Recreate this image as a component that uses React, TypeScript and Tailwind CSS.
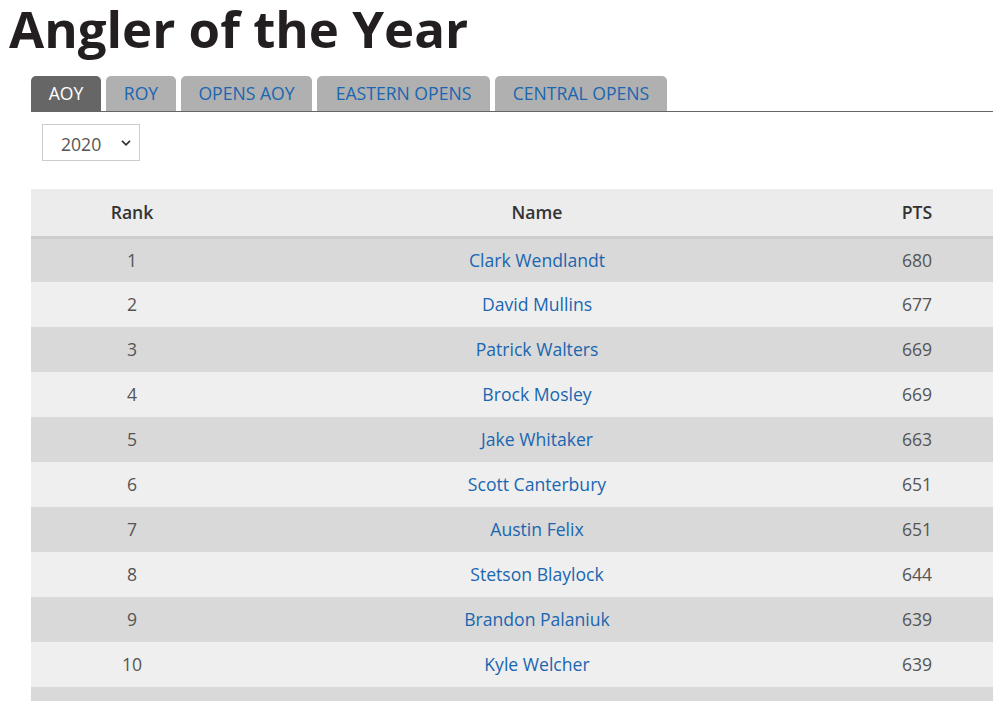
import React from "react";

const rows = [
  [1, "Clark Wendlandt", 680],
  [2, "David Mullins", 677],
  [3, "Patrick Walters", 669],
  [4, "Brock Mosley", 669],
  [5, "Jake Whitaker", 663],
  [6, "Scott Canterbury", 651],
  [7, "Austin Felix", 651],
  [8, "Stetson Blaylock", 644],
  [9, "Brandon Palaniuk", 639],
  [10, "Kyle Welcher", 639],
  [11, "Jordan Lee", 634],
];

const tabs: [string, string][] = [
  ["AOY", "w-[70px]"],
  ["ROY", "w-[70px]"],
  ["OPENS AOY", "w-[131px]"],
  ["EASTERN OPENS", "w-[173px]"],
  ["CENTRAL OPENS", "w-[172px]"],
];

export default function App() {
  return (
    <div className="h-[701px] overflow-hidden bg-white font-['Open_Sans',sans-serif] text-[#333]">
      <h1 className="pl-[9px] pt-0 text-[51px] font-bold leading-[56px] text-[#231f20]">
        Angler of the Year
      </h1>
      <div className="ml-[31px] mr-[12px] mt-[20px]">
        <div className="flex gap-[5px] border-b border-[#666]">
          {tabs.map(([t, w], i) => (
            <div
              key={t}
              className={
                "flex h-[35px] items-center justify-center rounded-t-[5px] text-[17.6px] " +
                w +
                " " +
                (i === 0 ? "bg-[#666] text-white" : "bg-[#b0b0b0] text-[#1a66b0]")
              }
            >
              {t}
            </div>
          ))}
        </div>
        <div className="ml-[11px] mt-[12px] flex h-[37px] w-[98px] items-center justify-between border border-[#ccc] pl-[18px] pr-[8px] pt-[3px] text-[17.6px] text-[#555]">
          <span>2020</span>
          <svg width="10" height="8" viewBox="0 0 10 8" className="-mt-[2px]">
            <path d="M1 1.8 L5 5.8 L9 1.8" fill="none" stroke="#333" strokeWidth="1.7" />
          </svg>
        </div>
        <table className="mt-[28px] w-[962px] border-collapse text-[17.6px]">
          <thead>
            <tr className="h-[48px] border-b-[3px] border-[#ccc] bg-[#ececec]">
              <th className="w-[202px] text-center font-semibold text-[#333]">Rank</th>
              <th className="w-[608px] text-center font-semibold text-[#333]">Name</th>
              <th className="text-center font-semibold text-[#333]">PTS</th>
            </tr>
          </thead>
          <tbody>
            {rows.map(([r, n, p], i) => (
              <tr key={r} className={"h-[45px] " + (i % 2 === 0 ? "bg-[#d9d9d9]" : "bg-[#efefef]")}>
                <td className="text-center text-[#555]">{r}</td>
                <td className="text-center text-[#1a66b0]">{n}</td>
                <td className="text-center text-[#555]">{p}</td>
              </tr>
            ))}
          </tbody>
        </table>
      </div>
    </div>
  );
}
